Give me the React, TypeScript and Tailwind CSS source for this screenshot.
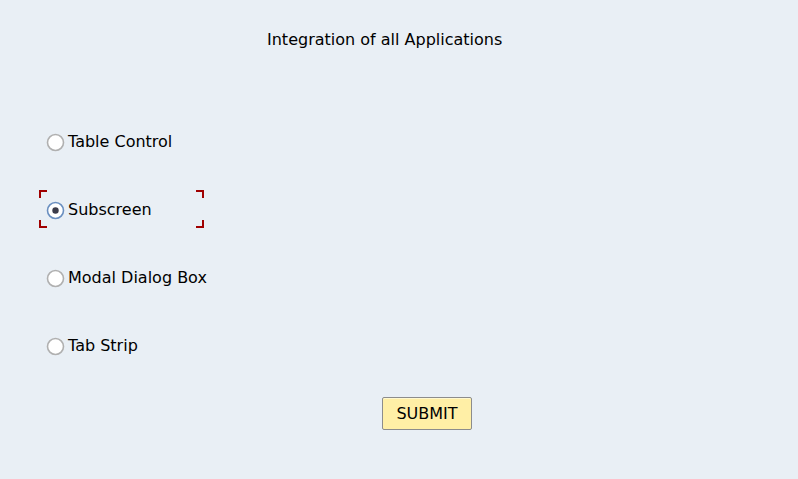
import React, { useState } from "react";

const options = ["Table Control", "Subscreen", "Modal Dialog Box", "Tab Strip"];

function Radio({ checked }: { checked: boolean }) {
  return (
    <svg width="19" height="19" viewBox="0 0 19 19" className="shrink-0">
      <circle cx="9.5" cy="9.5" r="8" fill="#ffffff" stroke={checked ? "#6a8fc0" : "#b0b0b0"} strokeWidth="1.6" />
      {checked && <circle cx="9.5" cy="9.5" r="3.2" fill="#3b3b4a" />}
    </svg>
  );
}

export default function App() {
  const [sel, setSel] = useState(1);
  return (
    <div
      className="w-[798px] h-[479px] bg-[#e9eff5] text-[#000000] relative overflow-hidden"
      style={{ fontFamily: "Tahoma, 'DejaVu Sans', Verdana, sans-serif" }}
    >
      <div className="flex flex-col">
        <div className="h-[80px] flex pt-[29px] pl-[267px] text-[16px] leading-[22px]">
          Integration of all Applications
        </div>
        <div className="flex flex-col pl-[46px] pt-[52px] gap-[48px]">
          {options.map((o, i) => (
            <div key={o} className="relative h-[20px] flex items-center cursor-pointer" onClick={() => setSel(i)}>
              {i === sel && (
                <div className="absolute left-[-7px] top-[-10px] w-[165px] h-[38px] pointer-events-none">
                  <div className="absolute left-0 top-0 w-[8px] h-[8px] border-l-2 border-t-2 border-[#a00000]" />
                  <div className="absolute right-0 top-0 w-[8px] h-[8px] border-r-2 border-t-2 border-[#a00000]" />
                  <div className="absolute left-0 bottom-0 w-[8px] h-[8px] border-l-2 border-b-2 border-[#a00000]" />
                  <div className="absolute right-0 bottom-0 w-[8px] h-[8px] border-r-2 border-b-2 border-[#a00000]" />
                </div>
              )}
              <Radio checked={i === sel} />
              <span className="ml-[3px] text-[16px] leading-[20px]">{o}</span>
            </div>
          ))}
        </div>
        <div className="pl-[382px] pt-[41px]">
          <button className="w-[90px] h-[33px] bg-[#ffefa6] border border-[#8c8c8c] rounded-[2px] text-[16px] leading-none shadow-[inset_0_1px_0_#fff8d0]">
            SUBMIT
          </button>
        </div>
      </div>
    </div>
  );
}
